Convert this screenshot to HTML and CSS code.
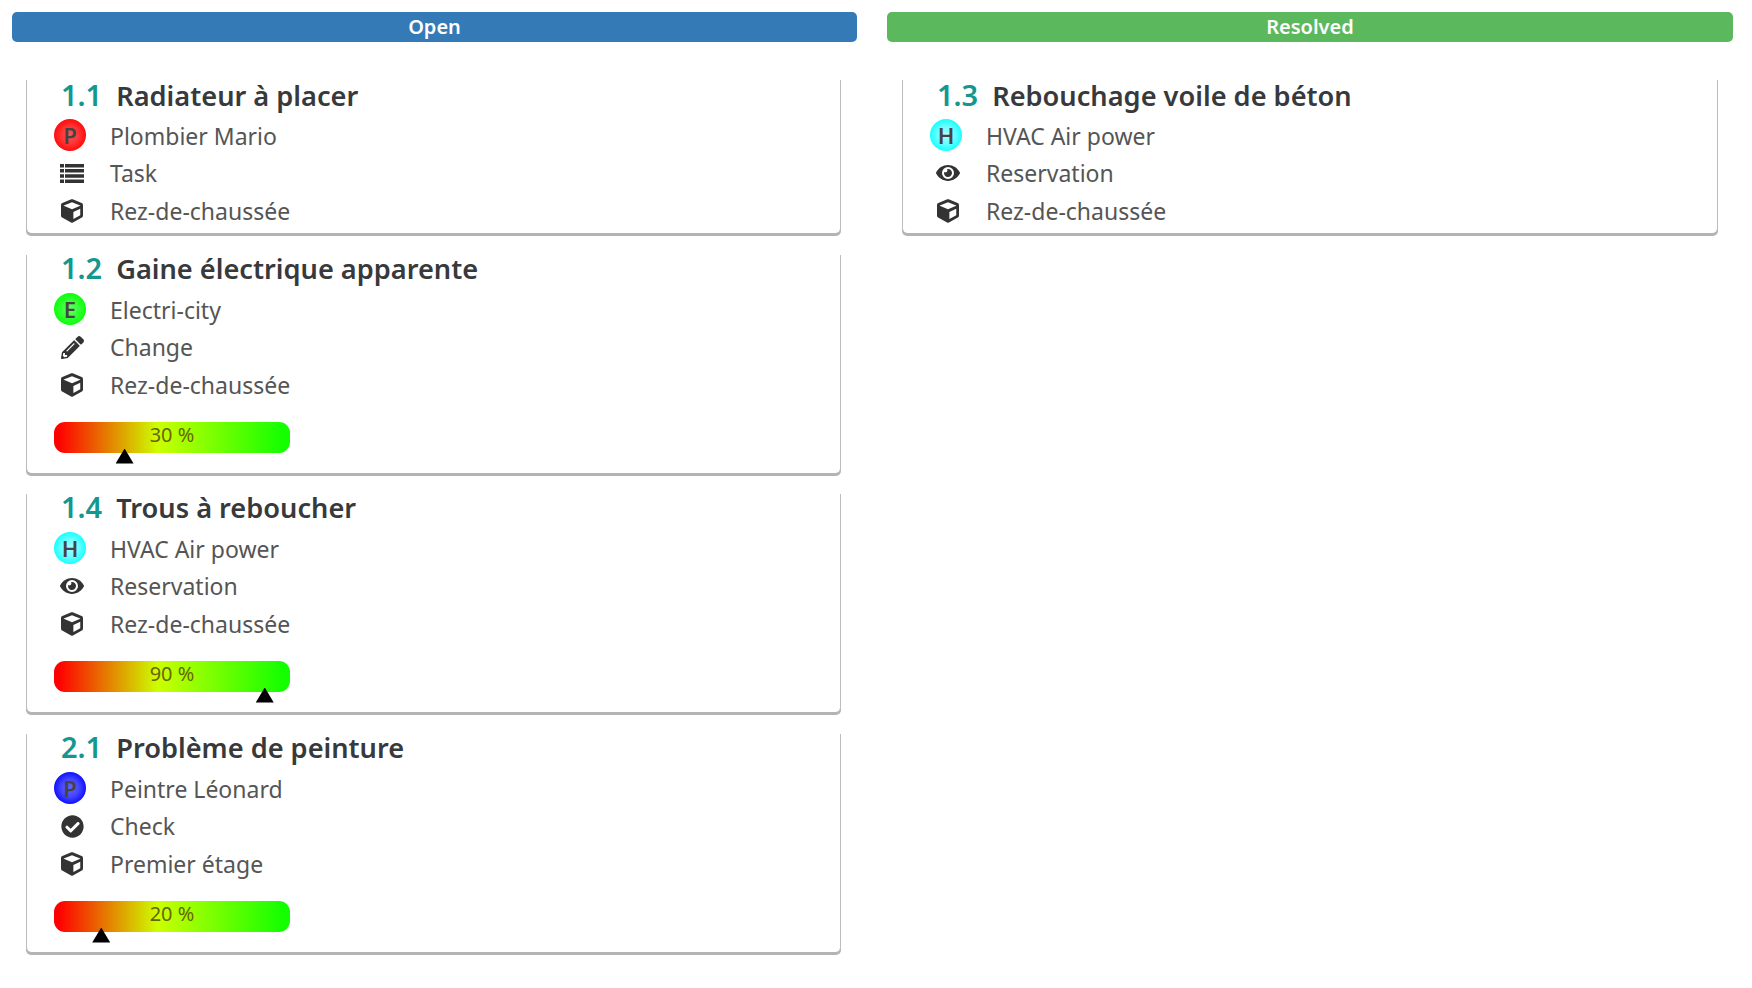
FILE: index.html
```html
<!DOCTYPE html>
<html lang="fr">
<head>
<meta charset="utf-8">
<title>Board</title>
<link rel="stylesheet" href="styles.css">
</head>
<body>
<svg class="defs" width="0" height="0" aria-hidden="true">
  <symbol id="i-cube" viewBox="0 0 512 512" preserveAspectRatio="none"><path d="M239.1 6.3l-208 78c-18.7 7-31.1 25-31.1 45v225.1c0 18.2 10.3 34.8 26.5 42.9l208 104c13.5 6.8 29.4 6.8 42.9 0l208-104c16.3-8.1 26.5-24.8 26.5-42.9V129.3c0-20-12.4-37.9-31.1-44.9l-208-78C262 2.2 250 2.2 239.1 6.3zM256 68.4l192 72v1.1l-192 78-192-78v-1.1l192-72zm32 356V275.5l160-65v133.9l-160 80z"/></symbol>
  <symbol id="i-eye" viewBox="0 0 576 512"><path d="M572.52 241.4C518.29 135.59 410.93 64 288 64S57.68 135.64 3.48 241.41a32.35 32.35 0 0 0 0 29.19C57.71 376.41 165.07 448 288 448s230.32-71.64 284.52-177.41a32.35 32.35 0 0 0 0-29.19zM288 400a144 144 0 1 1 144-144 143.93 143.93 0 0 1-144 144zm0-240a95.31 95.31 0 0 0-25.31 3.79 47.85 47.85 0 0 1-66.9 66.9A95.78 95.78 0 1 0 288 160z"/></symbol>
  <symbol id="i-pencil" viewBox="0 0 512 512"><path d="M497.9 142.1l-46.1 46.1c-4.7 4.7-12.3 4.7-17 0l-111-111c-4.7-4.7-4.7-12.3 0-17l46.1-46.1c18.7-18.7 49.1-18.7 67.9 0l60.1 60.1c18.8 18.7 18.8 49.1 0 67.9zM284.2 99.8L21.6 362.4.4 483.9c-2.9 16.4 11.4 30.6 27.8 27.8l121.5-21.3 262.6-262.6c4.7-4.7 4.7-12.3 0-17l-111-111c-4.8-4.7-12.4-4.7-17.1 0zM124.1 339.9c-5.5-5.5-5.5-14.3 0-19.8l154-154c5.5-5.5 14.3-5.5 19.8 0s5.5 14.3 0 19.8l-154 154c-5.5 5.5-14.3 5.5-19.8 0zM88 424h48v36.3l-64.5 11.3-31.1-31.1L51.7 376H88v48z"/></symbol>
  <symbol id="i-check" viewBox="0 0 512 512"><path d="M504 256c0 136.967-111.033 248-248 248S8 392.967 8 256 119.033 8 256 8s248 111.033 248 248zM227.314 387.314l184-184c6.248-6.248 6.248-16.379 0-22.627l-22.627-22.627c-6.248-6.249-16.379-6.249-22.628 0L216 308.118l-70.059-70.059c-6.248-6.248-16.379-6.248-22.628 0l-22.627 22.627c-6.248 6.248-6.248 16.379 0 22.627l104 104c6.249 6.249 16.379 6.249 22.628.001z"/></symbol>
  <symbol id="i-list" viewBox="0 0 24 19"><path d="M0 0h4v3.6H0zM5 0h19v3.6H5zM0 5h4v3.6H0zM5 5h19v3.6H5zM0 10.2h4v3.6H0zM5 10.2h19v3.6H5zM0 15.400h4V19H0zM5 15.400h19V19H5z"/></symbol>
</svg>
<main class="board">
  <section class="column">
    <h2 class="banner banner-open">Open</h2>
    <div class="cards">
      <article class="card">
        <h3 class="title"><span class="num">1.1</span><span>Radiateur à placer</span></h3>
        <div class="row"><span class="avatar avatar-red">P</span><span>Plombier Mario</span></div>
        <div class="row"><span class="ico"><svg class="svg-list"><use href="#i-list"/></svg></span><span>Task</span></div>
        <div class="row"><span class="ico"><svg class="svg-cube"><use href="#i-cube"/></svg></span><span>Rez-de-chaussée</span></div>
      </article>
      <article class="card">
        <h3 class="title"><span class="num">1.2</span><span>Gaine électrique apparente</span></h3>
        <div class="row"><span class="avatar avatar-green">E</span><span>Electri-city</span></div>
        <div class="row"><span class="ico"><svg class="svg-round"><use href="#i-pencil"/></svg></span><span>Change</span></div>
        <div class="row"><span class="ico"><svg class="svg-cube"><use href="#i-cube"/></svg></span><span>Rez-de-chaussée</span></div>
        <div class="progress"><span class="pct">30 %</span><div class="track"><span class="marker" style="left:30%"></span></div></div>
      </article>
      <article class="card">
        <h3 class="title"><span class="num">1.4</span><span>Trous à reboucher</span></h3>
        <div class="row"><span class="avatar avatar-cyan">H</span><span>HVAC Air power</span></div>
        <div class="row"><span class="ico"><svg class="svg-eye"><use href="#i-eye"/></svg></span><span>Reservation</span></div>
        <div class="row"><span class="ico"><svg class="svg-cube"><use href="#i-cube"/></svg></span><span>Rez-de-chaussée</span></div>
        <div class="progress"><span class="pct">90 %</span><div class="track"><span class="marker" style="left:90%"></span></div></div>
      </article>
      <article class="card">
        <h3 class="title"><span class="num">2.1</span><span>Problème de peinture</span></h3>
        <div class="row"><span class="avatar avatar-blue">P</span><span>Peintre Léonard</span></div>
        <div class="row"><span class="ico"><svg class="svg-round"><use href="#i-check"/></svg></span><span>Check</span></div>
        <div class="row"><span class="ico"><svg class="svg-cube"><use href="#i-cube"/></svg></span><span>Premier étage</span></div>
        <div class="progress"><span class="pct">20 %</span><div class="track"><span class="marker" style="left:20%"></span></div></div>
      </article>
    </div>
  </section>
  <section class="column">
    <h2 class="banner banner-resolved">Resolved</h2>
    <div class="cards">
      <article class="card">
        <h3 class="title"><span class="num">1.3</span><span>Rebouchage voile de béton</span></h3>
        <div class="row"><span class="avatar avatar-cyan">H</span><span>HVAC Air power</span></div>
        <div class="row"><span class="ico"><svg class="svg-eye"><use href="#i-eye"/></svg></span><span>Reservation</span></div>
        <div class="row"><span class="ico"><svg class="svg-cube"><use href="#i-cube"/></svg></span><span>Rez-de-chaussée</span></div>
      </article>
    </div>
  </section>
</main>
</body>
</html>
```
FILE: styles.css
```css
* { box-sizing: border-box; }
html, body { margin: 0; height: 100%; background: #fff; }
body {
  font-family: "Noto Sans", "Open Sans", sans-serif;
  color: #555;
  overflow: hidden;
}
.defs { position: absolute; }
.board {
  display: grid;
  grid-template-columns: 845px 846px;
  column-gap: 30px;
  padding: 12px 19px 0 12px;
}
.banner {
  margin: 0;
  height: 30px;
  line-height: 29px;
  border-radius: 5px;
  color: #fff;
  font-size: 20px;
  font-weight: 600;
  text-align: center;
}
.banner-open { background: #337ab7; }
.banner-resolved { background: #5cb85c; }
.cards {
  display: flex;
  flex-direction: column;
  gap: 21px;
  padding: 38px 15px 0;
}
.column:first-child .cards { padding: 38px 16px 0 14px; }
.card {
  border: 1px solid #bcbcbc;
  border-top: 0;
  border-bottom: 0;
  border-radius: 0 0 5px 5px;
  box-shadow: 0 3px 0 #b4b4b4;
  height: 218px;
  padding: 0 0 0 27px;
  background: #fff;
}
.card:first-child { height: 153px; margin-bottom: 1px; }
.card + .card + .card + .card { margin-top: 1px; }
.title {
  display: flex;
  align-items: baseline;
  gap: 14px;
  margin: 0 0 5px 7px;
  height: 31px;
  line-height: 26px;
  font-size: 27.200px;
  font-weight: 600;
  color: #37393c;
}
.card:first-child .title { margin-top: 2px; margin-bottom: 4px; }
.num { color: #14978f; font-weight: 600; font-size: 29px; }
.row {
  display: flex;
  align-items: center;
  height: 37.5px;
  font-size: 23px;
}
.ico, .avatar { flex: none; }
.ico {
  display: flex;
  justify-content: center;
  align-items: center;
  width: 24px;
  margin: 0 26px 0 6px;
  fill: #333;
}
.svg-cube { width: 22px; height: 24px; }
.svg-round { width: 23px; height: 23px; }
.svg-list { width: 24px; height: 19px; }
.svg-eye { width: 25px; height: 22px; }
.avatar {
  width: 32px;
  height: 32px;
  margin-right: 24px;
  border-radius: 50%;
  display: flex;
  align-items: center;
  justify-content: center;
  font-size: 22px;
  font-weight: 600;
  color: #444;
  position: relative;
  top: -1px;
}
.avatar-red { background: radial-gradient(circle, #f55 0%, #f33 40%, #f00 80%); }
.avatar-green { background: radial-gradient(circle, #6f6 0%, #3f3 40%, #0f0 80%); }
.avatar-cyan { background: radial-gradient(circle, #aff 0%, #6ff 40%, #0ff 80%); }
.avatar-blue { background: radial-gradient(circle, #66f 0%, #44f 40%, #00f 80%); }
.progress {
  position: relative;
  width: 236px;
  height: 31px;
  margin-top: 18px;
  border-radius: 11px;
  background: linear-gradient(to right, #f00 2%, #cf0 44%, #1f0 98%);
  text-align: center;
  font-size: 20px;
  line-height: 25px;
}
.pct { color: #666600; }
.track {
  position: absolute;
  top: 27px;
  left: 0.5px;
  width: 233.6px;
  height: 15px;
}
.marker {
  position: absolute;
  top: 0;
  margin-left: -9px;
  width: 18px;
  height: 15px;
  background: #000;
  clip-path: polygon(50% 0, 100% 100%, 0 100%);
}
```
